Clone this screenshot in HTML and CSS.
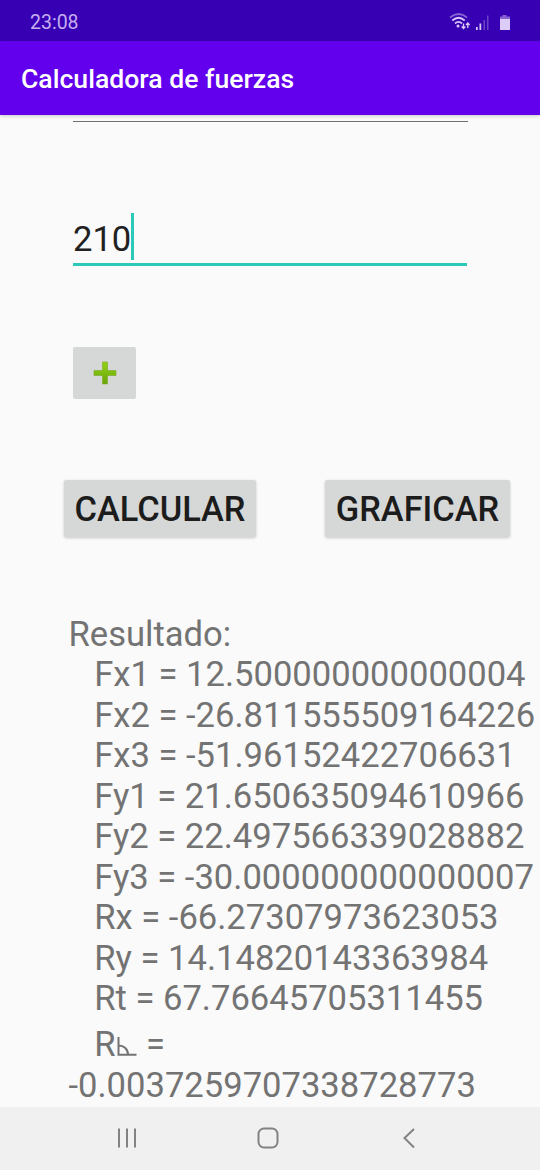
FILE: index.html
```
<!DOCTYPE html>
<html lang="es">
<head>
    <meta charset="UTF-8">
    <meta name="viewport" content="width=device-width, initial-scale=1.0">
    <title>Calculadora de fuerzas</title>
    <link rel="stylesheet" href="styles.css">
</head>
<body>
    <div class="status-bar">
        <span class="time">23:08</span>
        <svg class="status-icons" width="64" height="20" viewBox="0 0 64 20">
            <g fill="none" stroke="#d9c8f7" stroke-width="1.7">
                <path d="M1 6.5Q9.5 -.5 18 6.5" stroke="#8865d4"/>
                <path d="M3.3 9.5Q9.5 4 15.7 9.5"/>
                <path d="M6 12.5Q9.5 9.3 13 12.5"/>
            </g>
            <circle cx="9" cy="15" r="1.5" fill="#d9c8f7"/>
            <path d="M14.5 12.5v5M12.7 15.5l1.8 2 1.800-2M18.800 17v-5M17 14l1.800-2 1.800 2" fill="none" stroke="#d9c8f7" stroke-width="1.3"/>
            <path d="M27 16h1.7v3H27zM30.5 12.5h1.7V19h-1.7z" fill="#d9c8f7"/>
            <path d="M34.5 9H36v10h-1.5zM38 4.5h1.5V19H38z" fill="#6a43c4"/>
            <path d="M51 8V5.5h2.5V4h4v1.5H61V8z" fill="#8662d2"/>
            <path d="M51 8h10v11H51z" fill="#dccdf8"/>
        </svg>
    </div>
    <header class="header">
        <h1>Calculadora de fuerzas</h1>
    </header>
    <main class="container">
        <div class="field-line"></div>
        <div class="field">
            <span>210</span><i class="cursor"></i>
        </div>
        <button class="add-button" type="button" aria-label="Agregar">
            <svg width="26" height="26" viewBox="0 0 26 26">
                <defs>
                    <linearGradient id="green" x1="0" y1="0" x2="0" y2="1">
                        <stop offset="0" stop-color="#94d216"/>
                        <stop offset="1" stop-color="#68a507"/>
                    </linearGradient>
                </defs>
                <path d="M10.5 2h5v8.5H24v5h-8.5V24h-5v-8.5H2v-5h8.5z" fill="url(#green)" stroke="#79aa24" stroke-width=".6"/>
            </svg>
        </button>
        <div class="actions">
            <button class="calculate" type="button">CALCULAR</button>
            <button class="plot" type="button">GRAFICAR</button>
        </div>
        <div class="result">
            <p>Resultado:</p>
            <p>   Fx1 = 12.500000000000004</p>
            <p>   Fx2 = -26.811555509164226</p>
            <p>   Fx3 = -51.96152422706631</p>
            <p>   Fy1 = 21.650635094610966</p>
            <p>   Fy2 = 22.497566339028882</p>
            <p>   Fy3 = -30.000000000000007</p>
            <p>   Rx = -66.27307973623053</p>
            <p>   Ry = 14.14820143363984</p>
            <p>   Rt = 67.76645705311455</p>
            <p class="angle">   R<svg width="22" height="20" viewBox="0 0 22 20"><path d="M2.5 1v17.8H20.5M2.5 9.5C8 9.5 12 13 12 18.8" fill="none" stroke="#737373" stroke-width="2"/></svg> =</p>
            <p>-0.0037259707338728773</p>
        </div>
    </main>
    <nav class="nav-bar">
        <svg width="22" height="22" viewBox="0 0 22 22"><path d="M3 1.5v19M11 1.5v19M19 1.5v19"/></svg>
        <svg width="22" height="22" viewBox="0 0 22 22"><rect x="1.5" y="1.5" width="19" height="19" rx="5.5"/></svg>
        <svg width="22" height="22" viewBox="0 0 22 22"><path d="M16 2L6.5 11 16 20.5"/></svg>
    </nav>
</body>
</html>
```
FILE: styles.css
```
* {
    box-sizing: border-box;
}
body {
    font-family: Roboto, sans-serif;
    margin: 0;
    height: 1170px;
    display: flex;
    flex-direction: column;
    overflow: hidden;
    background-color: #fafafa;
}
.status-bar {
    display: flex;
    justify-content: space-between;
    align-items: center;
    flex: none;
    height: 41px;
    padding: 3px 27px 0 30px;
    background-color: #3700b3;
    color: #c5aef0;
    font-size: 19.5px;
}
.status-icons {
    margin-top: -3px;
}
.header {
    display: flex;
    align-items: center;
    flex: none;
    height: 74px;
    padding: 1px 21px 0;
    background-color: #6200ee;
    box-shadow: 0 1px 4px rgba(0, 0, 0, 0.2);
}
h1 {
    margin: 0;
    font-size: 26.6px;
    font-weight: 500;
    color: #fff;
}
.container {
    flex: 1;
    min-height: 0;
}
.field-line {
    height: 1px;
    width: 395px;
    margin: 6px 0 0 73px;
    background-color: #6f6f6f;
}
.field {
    display: flex;
    align-items: center;
    width: 394px;
    height: 53px;
    margin: 91px 0 0 73px;
    padding-bottom: 3px;
    border-bottom: 3px solid #2bc9b9;
    color: #212121;
    font-size: 34.6px;
}
.field span {
    padding-top: 4px;
}
.cursor {
    width: 2.5px;
    height: 47px;
    background-color: #2bc9b9;
}
button {
    border: none;
    border-radius: 2px;
    padding: 0;
    background-color: #d6d7d7;
    color: #1c1c1c;
    font-family: inherit;
}
.add-button {
    display: flex;
    justify-content: center;
    align-items: center;
    width: 63px;
    height: 52px;
    margin: 81px 0 0 73px;
}
.actions {
    display: flex;
    gap: 69px;
    margin: 81px 0 0 64px;
}
.actions button {
    height: 57px;
    padding-top: 1px;
    font-size: 34.4px;
    font-weight: 500;
    box-shadow: 0 1px 3px rgba(0, 0, 0, 0.2);
}
.calculate {
    width: 192px;
}
.plot {
    width: 185px;
}
.result {
    margin: 76.5px 0 0 68.5px;
    color: #737373;
    font-size: 34.6px;
    line-height: 40.55px;
}
.result p {
    margin: 0;
    white-space: pre;
}
.result .angle {
    height: 46.5px;
    padding-top: 5px;
}
.nav-bar {
    display: flex;
    justify-content: center;
    align-items: center;
    gap: 119px;
    flex: none;
    height: 63px;
    padding: 0 4px 2px 0;
    background-color: #f0f0f0;
}
.nav-bar svg {
    fill: none;
    stroke: #828282;
    stroke-width: 2;
}
```
